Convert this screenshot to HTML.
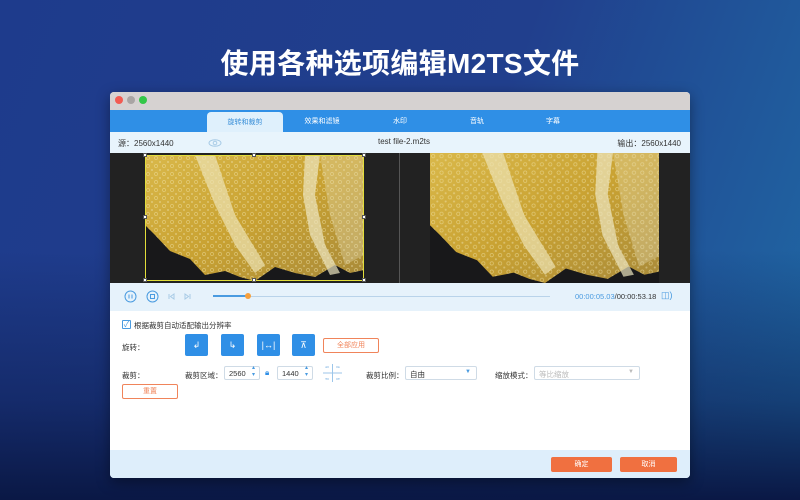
<!DOCTYPE html>
<html><head><meta charset="utf-8"><style>
*{margin:0;padding:0;box-sizing:border-box}
body{width:800px;height:500px;overflow:hidden;position:relative;font-family:"Liberation Sans","Noto Sans CJK SC",sans-serif;background:linear-gradient(110deg,#1e3b8c 0%,#213f8d 55%,#1f6aa5 100%)}
.bot{position:absolute;left:0;right:0;top:250px;bottom:0;background:linear-gradient(180deg,rgba(10,20,60,0) 0%,rgba(11,26,74,.5) 60%,#0a1845 100%)}
h1{position:absolute;top:42px;left:0;width:800px;text-align:center;color:#fff;font-size:28px;font-weight:bold;letter-spacing:0.3px}
.win{position:absolute;left:110px;top:92px;width:580px;height:386px;background:#fff;border-radius:4px;overflow:hidden;box-shadow:0 4px 14px rgba(0,0,0,.4)}
.tb{position:absolute;left:0;top:0;width:580px;height:18px;background:#d6d2d1}
.dot{position:absolute;top:4px;width:8px;height:8px;border-radius:50%}
.tabs{position:absolute;top:18px;left:0;width:580px;height:22px;background:#2f8fe6}
.tab{position:absolute;top:6px;font-size:7px;color:#fff;text-align:center;width:76px}
.tab.a{top:2px;height:20px;background:#dff0fc;color:#3a8fd8;border-radius:4px 4px 0 0;padding-top:5px;left:97px}
.info{position:absolute;top:40px;left:0;width:580px;height:21px;background:#e8f4fc;font-size:8px;color:#333}
.vid{position:absolute;top:61px;left:0;width:580px;height:130px;background:#222}
.ctrl{position:absolute;top:191px;left:0;width:580px;height:28px;background:#e6f2fb}
.lbl{position:absolute;font-size:7.5px;color:#333}
.bbtn{position:absolute;top:242px;width:23px;height:22px;background:#2f8fe6;border-radius:2px;color:#fff;font-size:9px;text-align:center;line-height:22px}
.obtn{position:absolute;border:1px solid #f0845a;border-radius:2px;color:#f0845a;font-size:7px;text-align:center;background:#fff}
.inp{position:absolute;height:14px;border:1px solid #cfdbe6;border-radius:2px;font-size:7.5px;color:#333;padding:2px 4px;background:#fff}
.foot{position:absolute;top:358px;left:0;width:580px;height:28px;background:#deeefb}
.fb{position:absolute;top:365px;height:15px;background:#f07040;color:#fff;font-size:7px;text-align:center;line-height:15px;border-radius:2px}
.h{position:absolute;width:4px;height:4px;background:#fff;border:1px solid #555}
</style></head><body>
<div class="bot"></div>
<h1>使用各种选项编辑M2TS文件</h1>
<div class="win">
 <div class="tb"><div class="dot" style="left:5px;background:#f25b52"></div><div class="dot" style="left:17px;background:#a9a5a4"></div><div class="dot" style="left:29px;background:#33c748"></div></div>
 <div class="tabs">
  <div class="tab a">旋转和裁剪</div>
  <div class="tab" style="left:174px">效果和滤镜</div>
  <div class="tab" style="left:252px">水印</div>
  <div class="tab" style="left:329px">音轨</div>
  <div class="tab" style="left:405px">字幕</div>
 </div>
 <div class="info"><span style="position:absolute;left:8px;top:6px">源：2560x1440</span>
  <svg style="position:absolute;left:98px;top:7px" width="14" height="8"><ellipse cx="7" cy="4" rx="6" ry="3.3" fill="none" stroke="#a8cbe6"/><circle cx="7" cy="4" r="1.8" fill="none" stroke="#a8cbe6"/></svg>
  <span style="position:absolute;left:268px;top:5px">test file-2.m2ts</span>
  <span style="position:absolute;right:9px;top:6px">输出：2560x1440</span></div>
 <div class="vid">
  <svg width="0" height="0" style="position:absolute"><defs>
   <linearGradient id="g" x1="0" y1="0" x2="1" y2="1"><stop offset="0" stop-color="#d9b84a"/><stop offset=".5" stop-color="#c9a232"/><stop offset="1" stop-color="#a88a3a"/></linearGradient>
   <pattern id="b" width="8" height="8" patternUnits="userSpaceOnUse"><circle cx="3" cy="3" r="1.6" fill="none" stroke="#f3e7b0" stroke-width=".6" opacity=".6"/><circle cx="7" cy="7" r="1" fill="#f6eec8" opacity=".4"/></pattern>
  </defs></svg>
  <svg style="position:absolute;left:35px;top:2px" width="219" height="126" viewBox="0 0 219 126" preserveAspectRatio="none">
   <rect width="219" height="126" fill="#18181a"/>
   <path d="M0 0H219V115L205 118 190 110 170 122 150 118 130 112 110 126 95 122 80 116 60 120 45 104 25 96 10 80 0 70Z" fill="url(#g)"/>
   <path d="M0 0H219V115L205 118 190 110 170 122 150 118 130 112 110 126 95 122 80 116 60 120 45 104 25 96 10 80 0 70Z" fill="url(#b)"/>
   <path d="M50 0L70 0 90 60 120 110 110 118 90 90 70 50Z" fill="#ece3b4" opacity=".7"/>
   <path d="M160 0L175 0 170 40 180 90 195 118 185 120 165 80 158 40Z" fill="#ece6c0" opacity=".7"/>
   <path d="M175 0H219V100L200 110 185 60Z" fill="#e8dfb8" opacity=".35"/>
  </svg>
  <div style="position:absolute;left:35px;top:2px;width:219px;height:126px;border:1.5px solid #e2dd3a"></div>
  <div class="h" style="left:33px;top:0"></div><div class="h" style="left:142px;top:0"></div><div class="h" style="left:252px;top:0"></div>
  <div class="h" style="left:33px;top:62px"></div><div class="h" style="left:252px;top:62px"></div>
  <div class="h" style="left:33px;top:125px"></div><div class="h" style="left:142px;top:125px"></div><div class="h" style="left:252px;top:125px"></div>
  <div style="position:absolute;left:289px;top:0;width:1px;height:130px;background:#555"></div>
  <svg style="position:absolute;left:320px;top:0" width="229" height="130" viewBox="0 0 219 126" preserveAspectRatio="none">
   <rect width="219" height="126" fill="#18181a"/>
   <path d="M0 0H219V115L205 118 190 110 170 122 150 118 130 112 110 126 95 122 80 116 60 120 45 104 25 96 10 80 0 70Z" fill="url(#g)"/>
   <path d="M0 0H219V115L205 118 190 110 170 122 150 118 130 112 110 126 95 122 80 116 60 120 45 104 25 96 10 80 0 70Z" fill="url(#b)"/>
   <path d="M50 0L70 0 90 60 120 110 110 118 90 90 70 50Z" fill="#ece3b4" opacity=".7"/>
   <path d="M160 0L175 0 170 40 180 90 195 118 185 120 165 80 158 40Z" fill="#ece6c0" opacity=".7"/>
   <path d="M175 0H219V100L200 110 185 60Z" fill="#e8dfb8" opacity=".35"/>
  </svg>
 </div>
 <div class="ctrl">
  <svg style="position:absolute;left:14px;top:7px" width="80" height="14"><circle cx="6.5" cy="6.5" r="5.5" fill="none" stroke="#4a9be0"/><path d="M5 4.5v4M8 4.5v4" stroke="#4a9be0"/><circle cx="28.5" cy="6.5" r="5.5" fill="none" stroke="#4a9be0"/><rect x="26.5" y="4.5" width="4" height="4" fill="none" stroke="#4a9be0"/><path d="M45 4v5M50 4L46.5 6.5 50 9Z" stroke="#a8cbe6" fill="none"/><path d="M66 4v5M61 4L64.5 6.5 61 9Z" stroke="#a8cbe6" fill="none"/></svg>
  <div style="position:absolute;left:103px;top:13px;width:337px;height:1px;background:#b9d3ea"></div>
  <div style="position:absolute;left:103px;top:12px;width:35px;height:2px;background:#4a9be0"></div>
  <div style="position:absolute;left:135px;top:10px;width:6px;height:6px;border-radius:50%;background:#f6a03c"></div>
  <span style="position:absolute;left:465px;top:9px;font-size:7.5px;color:#4a9be0">00:00:05.03<span style="color:#333">/00:00:53.18</span></span>
  <span style="position:absolute;left:551px;top:7px;font-size:9px;color:#4a9be0">◫)</span>
 </div>
 <div style="position:absolute;left:12px;top:228px;width:9px;height:9px;border:1px solid #4a9be0;border-radius:1px;font-size:8px;color:#4a9be0;line-height:7px;text-align:center">✓</div>
 <div class="lbl" style="left:24px;top:228px">根据裁剪自动适配输出分辨率</div>
 <div class="lbl" style="left:12px;top:250px">旋转：</div>
 <div class="bbtn" style="left:75px">↲</div><div class="bbtn" style="left:111px">↳</div><div class="bbtn" style="left:147px">|↔|</div><div class="bbtn" style="left:182px">⊼</div>
 <div class="obtn" style="left:213px;top:246px;width:56px;height:15px;line-height:13px">全部应用</div>
 <div class="lbl" style="left:12px;top:278px">裁剪：</div>
 <div class="lbl" style="left:75px;top:278px">裁剪区域：</div>
 <div class="inp" style="left:114px;top:274px;width:36px">2560</div>
 <span style="position:absolute;left:142px;top:273px;font-size:6px;color:#4a9be0;line-height:7px">▴<br>▾</span>
 <span style="position:absolute;left:155px;top:276px;font-size:8px;color:#2f8fe6">🔒︎</span>
 <div class="inp" style="left:167px;top:274px;width:36px">1440</div>
 <span style="position:absolute;left:195px;top:273px;font-size:6px;color:#4a9be0;line-height:7px">▴<br>▾</span>
 <svg style="position:absolute;left:213px;top:272px" width="19" height="18"><path d="M9.5 0v18M0 9h19" stroke="#9cc6ea"/><path d="M3 4V3h3M13 3h3v1M16 14v1h-3M6 15H3v-1" stroke="#9cc6ea" fill="none"/></svg>
 <div class="lbl" style="left:256px;top:278px">裁剪比例：</div>
 <div class="inp" style="left:295px;top:274px;width:72px">自由<span style="position:absolute;right:5px;top:2px;font-size:6px;color:#4a9be0">▼</span></div>
 <div class="lbl" style="left:385px;top:278px">缩放模式：</div>
 <div class="inp" style="left:424px;top:274px;width:106px;color:#bbb">等比缩放<span style="position:absolute;right:5px;top:2px;font-size:6px;color:#bbb">▼</span></div>
 <div class="obtn" style="left:12px;top:292px;width:56px;height:15px;line-height:13px">重置</div>
 <div class="foot"></div>
 <div class="fb" style="left:441px;width:61px">确定</div>
 <div class="fb" style="left:510px;width:57px">取消</div>
</div>
</body></html>
